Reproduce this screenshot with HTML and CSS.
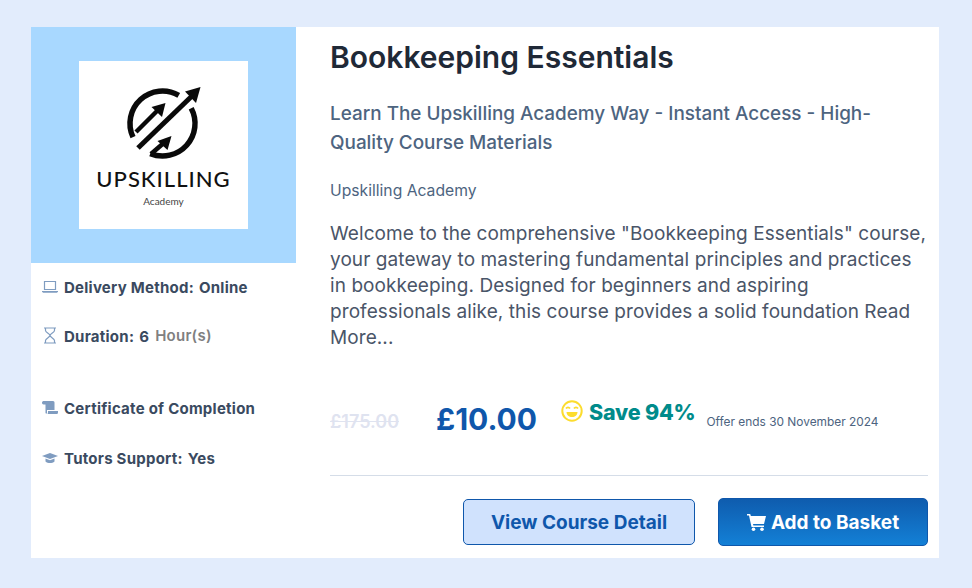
FILE: index.html

```html
<!DOCTYPE html>
<html>
<head>
  <meta charset="UTF-8">
  <title>Bookkeeping Essentials</title>
  <link rel="stylesheet" href="styles.css">
</head>
<body>
  <div class="card">
    <div class="side">
      <div class="thumb">
        <div class="logo">
          <svg class="logo-mark" width="78" height="74" viewBox="0 0 78 74" fill="none" stroke="#0a0a0a" stroke-width="5.500">
            <path d="M8 50.200 A32.500 32.500 0 0 1 53.750 8.400"/>
            <path d="M66.200 21.200 A32.500 32.500 0 0 1 25.300 66.600"/>
            <path d="M13 61 L68 8" stroke-width="5"/>
            <path d="M75.500 0 L60 4.500 L71 16 Z" fill="#0a0a0a" stroke="none"/>
            <path d="M11 45 L35 21" stroke-width="4.500"/>
            <path d="M40.500 16 L26.500 20 L37 30 Z" fill="#0a0a0a" stroke="none"/>
            <path d="M26 67 L41 54" stroke-width="4.500"/>
            <path d="M46.500 49 L32.500 54 L42.500 63 Z" fill="#0a0a0a" stroke="none"/>
          </svg>
          <div class="logo-name">UPSKILLING</div>
          <div class="logo-sub">Academy</div>
        </div>
      </div>
      <ul class="facts">
        <li class="fact fact-delivery">
          <svg class="fact-icon" width="16" height="14" viewBox="0 0 16 14"><path d="M2.500 1.500h11v8h-11z" fill="none" stroke="#7f9cc0" stroke-width="1.200"/><path d="M0 11h16v.6l-1 1.200H1L0 11.600z" fill="#7f9cc0"/></svg>
          <span>Delivery Method:</span><span>Online</span>
        </li>
        <li class="fact fact-duration">
          <svg class="fact-icon" width="16" height="17" viewBox="0 0 16 17"><path d="M2 1h12M2 16h12M3.500 1v2.500c0 2 4.500 3.500 4.500 5s-4.500 3-4.500 5V16M12.500 1v2.500c0 2-4.500 3.500-4.500 5s4.500 3 4.500 5V16" fill="none" stroke="#7f9cc0" stroke-width="1.200"/></svg>
          <span>Duration:</span><span>6</span><span class="unit">Hour(s)</span>
        </li>
        <li class="fact fact-cert">
          <svg class="fact-icon" width="16" height="14" viewBox="0 0 16 14"><path d="M0 1.500C0 .5 1 0 2 0h9c1 0 1.500.8 1.500 1.800V9H5v2.500C5 13 4 13 3.500 12V3.500H1.500C.5 3.500 0 2.500 0 1.500z" fill="#7f9cc0"/><path d="M6 10h10v1.500c0 1-.8 1.500-1.500 1.500H5.500C6 12.500 6 11 6 10z" fill="#7f9cc0"/></svg>
          <span>Certificate of Completion</span>
        </li>
        <li class="fact fact-support">
          <svg class="fact-icon" width="16" height="10" viewBox="0 0 16 10"><path d="M8 0l8 3-8 3-8-3z" fill="#7f9cc0"/><path d="M3.500 5.500L8 7.200l4.500-1.700V8.500C11.500 9.500 9.500 10 8 10s-3.500-.5-4.500-1.500z" fill="#7f9cc0"/></svg>
          <span>Tutors Support:</span><span>Yes</span>
        </li>
      </ul>
    </div>
    <div class="main">
      <h1 class="title">Bookkeeping Essentials</h1>
      <h2 class="subtitle">Learn The Upskilling Academy Way - Instant Access - High-Quality Course Materials</h2>
      <div class="provider">Upskilling Academy</div>
      <p class="desc">Welcome to the comprehensive "Bookkeeping Essentials" course, your gateway to mastering fundamental principles and practices in bookkeeping. Designed for beginners and aspiring professionals alike, this course provides a solid foundation Read More...</p>
      <div class="prices">
        <span class="old-price">£175.00</span>
        <span class="price">£10.00</span>
        <svg class="smile" width="22" height="22" viewBox="0 0 22 22">
          <circle cx="11" cy="11" r="9.700" fill="none" stroke="#fcdc2e" stroke-width="2"/>
          <path d="M5 8.500c1-1.500 3-1.500 4 0M13 8.500c1-1.500 3-1.500 4 0" fill="none" stroke="#fcdc2e" stroke-width="1.800"/>
          <path d="M5.500 12h11c0 3-2.500 5-5.500 5s-5.500-2-5.500-5z" fill="#fcdc2e"/>
        </svg>
        <span class="save">Save 94%</span>
        <span class="offer">Offer ends 30 November 2024</span>
      </div>
      <div class="actions">
        <a class="btn btn-light">View Course Detail</a>
        <a class="btn btn-dark">
          <svg width="19" height="17" viewBox="0 0 19 17"><path d="M0 0h3.200l.7 2H19l-2 8H6l.4 1.500H17V13H4.500L2 1.500H0z" fill="#fff"/><circle cx="6.500" cy="15.200" r="1.800" fill="#fff"/><circle cx="15" cy="15.200" r="1.800" fill="#fff"/></svg>
          Add to Basket
        </a>
      </div>
    </div>
  </div>
</body>
</html>
```

FILE: styles.css

```css
body {
  background: #e2ecfc;
  margin: 0;
  padding: 27px 33px 30px 31px;
  font-family: Inter, "Liberation Sans", sans-serif;
}
.card {
  display: flex;
  height: 531px;
  background: #fff;
}
.side {
  width: 265px;
  flex-shrink: 0;
}
.thumb {
  height: 236px;
  background: #a8d8ff;
  display: flex;
  align-items: center;
  justify-content: center;
}
.logo {
  width: 169px;
  height: 168px;
  background: #fff;
  display: flex;
  flex-direction: column;
  align-items: center;
  padding-top: 26px;
  box-sizing: border-box;
}
.logo-mark {
  display: block;
}
.logo-name {
  font-family: Lato, sans-serif;
  font-size: 22px;
  font-weight: 500;
  line-height: 24px;
  letter-spacing: 1px;
  color: #111;
  margin-top: 6px;
}
.logo-sub {
  font-family: Lato, sans-serif;
  font-size: 10px;
  line-height: 12px;
  color: #444;
  margin-top: 4px;
}
.facts {
  list-style: none;
  margin: 0;
  padding: 0 0 0 11px;
}
.fact {
  display: flex;
  align-items: center;
  gap: 5px;
  font-size: 15px;
  font-weight: 700;
  line-height: 20px;
  color: #3a4a60;
  letter-spacing: 0.250px;
}
.fact-icon {
  width: 16px;
  margin-right: 1px;
  margin-bottom: 3px;
  flex-shrink: 0;
}
.fact-delivery { margin-top: 15px; }
.fact-duration { margin-top: 28px; }
.fact-cert { margin-top: 52px; }
.fact-support { margin-top: 30px; }
.unit {
  color: #808080;
  font-weight: 600;
  margin-left: 1px;
  margin-bottom: 1px;
}
.main {
  flex: 1;
  padding: 0 11px 0 34px;
}
.title {
  margin: 13px 0 0;
  font-size: 30px;
  line-height: 34px;
  font-weight: 600;
  color: #1f2937;
}
.subtitle {
  margin: 25px 0 0;
  font-size: 18.900px;
  line-height: 29px;
  font-weight: 500;
  color: #4d6480;
}
.provider {
  margin-top: 24px;
  font-size: 15.700px;
  line-height: 20px;
  color: #4d6480;
}
.desc {
  margin: 20px 0 0;
  font-size: 19px;
  line-height: 26px;
  letter-spacing: 0.080px;
  color: #4a5568;
}
.prices {
  display: flex;
  align-items: flex-start;
  height: 78px;
  margin-top: 46px;
  border-bottom: 1px solid #d5dde8;
}
.old-price {
  font-size: 18px;
  line-height: 22px;
  font-weight: 600;
  color: #dfe3f0;
  text-decoration: line-through;
  margin-top: 14px;
  width: 106px;
}
.price {
  font-size: 30px;
  line-height: 36px;
  font-weight: 700;
  color: #0f57ab;
  margin-top: 4px;
  width: 125px;
}
.smile {
  margin-top: 3px;
}
.save {
  font-size: 21.500px;
  line-height: 28px;
  font-weight: 800;
  letter-spacing: -0.200px;
  color: #008b8b;
  margin: 1px 0 0 6px;
}
.offer {
  font-size: 11.900px;
  line-height: 14px;
  color: #4d6480;
  margin: 18px 0 0 11px;
}
.actions {
  display: flex;
  justify-content: flex-end;
  gap: 23px;
  margin-top: 23px;
}
.btn {
  display: flex;
  align-items: center;
  justify-content: center;
  gap: 5px;
  height: 46px;
  box-sizing: border-box;
  border-radius: 5px;
  border: 1px solid #0f57ab;
  font-size: 19px;
  font-weight: 700;
}
.btn-light {
  width: 232px;
  background: #d0e2fd;
  color: #0f57ab;
}
.btn-dark {
  width: 210px;
  height: 48px;
  margin-top: -1px;
  background: linear-gradient(#0f5cae, #1380d6);
  color: #fff;
}
```
